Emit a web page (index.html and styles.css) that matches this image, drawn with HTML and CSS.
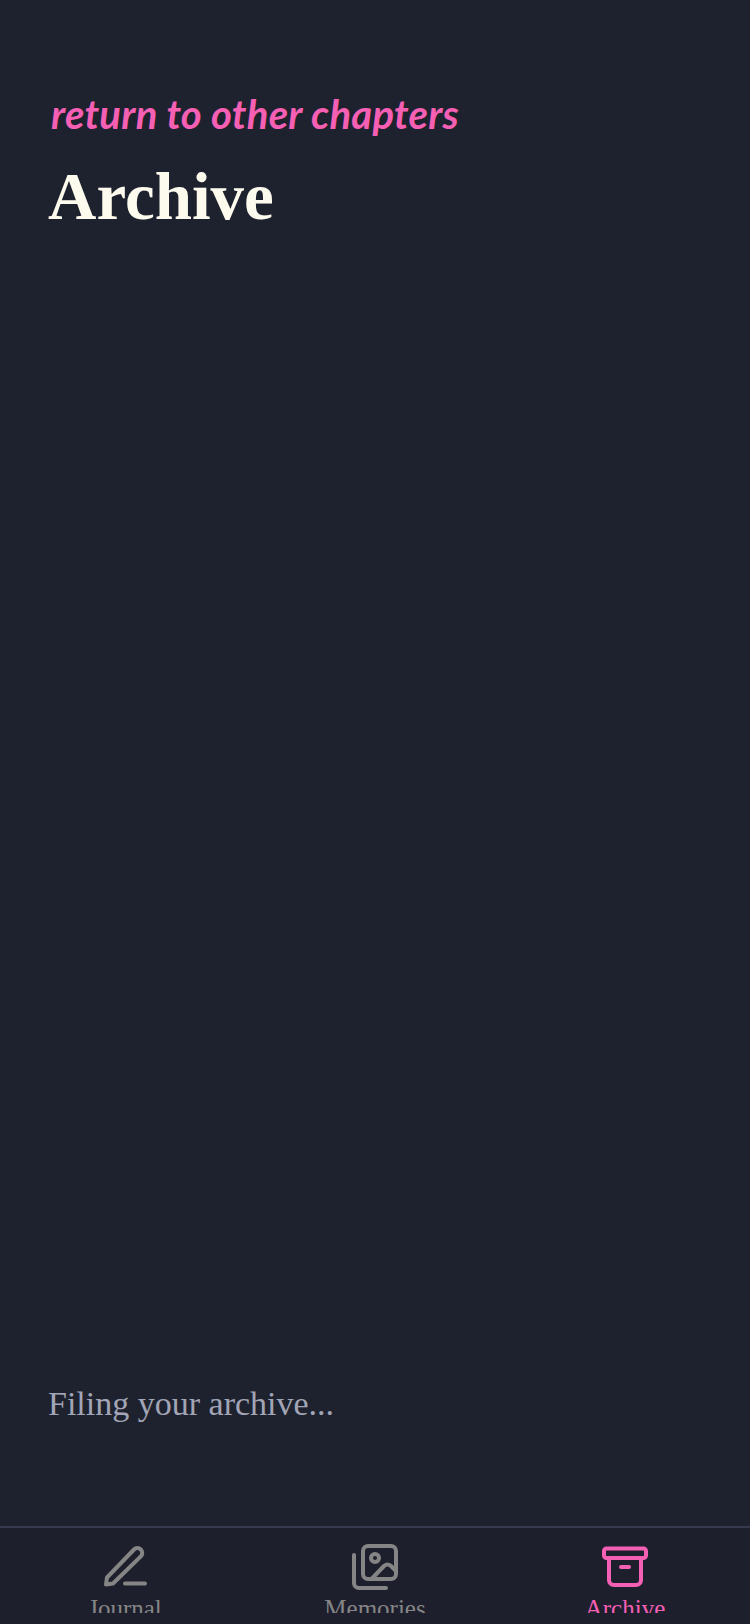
FILE: index.html
```html
<!DOCTYPE html>
<html lang="en">
<head>
  <meta charset="UTF-8">
  <title>Archive</title>
  <link rel="stylesheet" href="styles.css">
</head>
<body>
  <main class="page">
    <a class="back">return to other chapters</a>
    <h1 class="title">Archive</h1>
    <p class="loading">Filing your archive...</p>
  </main>

  <nav class="tabs">
    <div class="tab">
      <svg class="ico" viewBox="0 0 48 48" fill="none" stroke="currentColor" stroke-width="4" stroke-linecap="round" stroke-linejoin="round">
        <path d="M5 42.5l1-7L33 7.5a4.8 4.8 0 0 1 6.8 0 4.8 4.8 0 0 1 0 6.8L12 41.5z"/>
        <path d="M24 41.5h20"/>
      </svg>
      <span class="lbl">Journal</span>
    </div>
    <div class="tab">
      <svg class="ico" viewBox="0 0 48 48" fill="none" stroke="currentColor" stroke-width="4" stroke-linecap="round" stroke-linejoin="round">
        <rect x="12" y="4" width="33" height="33" rx="5"/>
        <path d="M3 13v28a5 5 0 0 0 5 5h27"/>
        <circle cx="24" cy="16" r="4"/>
        <path d="M21 36.5l12-12.5q3.5-3 7 0l5 5"/>
      </svg>
      <span class="lbl">Memories</span>
    </div>
    <div class="tab active">
      <svg class="ico" viewBox="0 0 48 48" fill="none" stroke="currentColor" stroke-width="4" stroke-linecap="round" stroke-linejoin="round">
        <rect x="3" y="6.5" width="42" height="9.5" rx="2.5"/>
        <path d="M8 16v22a5 5 0 0 0 5 5h22a5 5 0 0 0 5-5V16"/>
        <path d="M20 25h8"/>
      </svg>
      <span class="lbl">Archive</span>
    </div>
  </nav>
</body>
</html>
```

FILE: styles.css
```css
html, body{
  margin: 0;
  padding: 0;
  height: 100%;
}
body{
  display: flex;
  flex-direction: column;
  height: 1624px;
  overflow: hidden;
  background-color: #1e222e;
  font-family: "Liberation Serif", serif;
}

/* main area */
.page{
  flex: 1;
  display: flex;
  flex-direction: column;
  align-items: flex-start;
  padding: 89px 48px 100px;
}
.back{
  margin-left: 3px;
  font: italic 700 40px/50px "Lato", sans-serif;
  letter-spacing: 0.25px;
  color: #f55fb4;
}
.title{
  margin: 19px 0 0;
  font-size: 67px;
  line-height: 76px;
  font-weight: 700;
  color: #fdfbee;
}
.loading{
  margin: auto 0 0;
  font-size: 34px;
  line-height: 44px;
  color: #a2a5b6;
}

/* bottom tabs */
.tabs{
  display: flex;
  border-top: 2px solid #38384f;
  background-color: #1e1f2d;
  padding: 14px 0 11px;
}
.tab{
  flex: 1;
  display: flex;
  flex-direction: column;
  align-items: center;
  height: 71px;
  overflow: hidden;
  color: #858585;
}
.tab.active{
  color: #f55fb4;
}
.ico{
  width: 48px;
  height: 48px;
  flex-shrink: 0;
}
.lbl{
  margin-top: 4px;
  font-size: 25px;
  line-height: 30px;
}
```
